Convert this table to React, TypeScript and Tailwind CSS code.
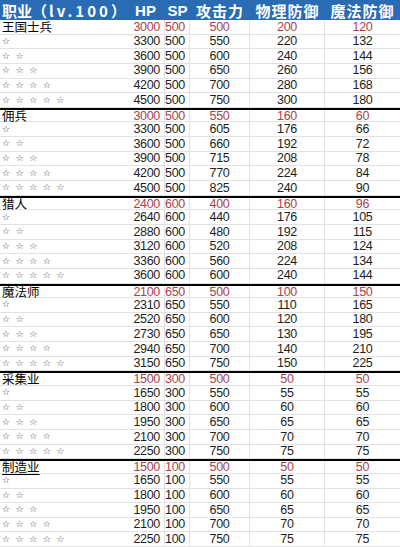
import React from "react";

type Group = {
  name: string;
  hp: number[];
  sp: number;
  atk: number[];
  def: number[];
  mdef: number[];
  underline?: boolean;
};

const STEP5 = [500, 550, 600, 650, 700, 750];
const LOW = [50, 55, 60, 65, 70, 75];

const GROUPS: Group[] = [
  {
    name: "王国士兵",
    hp: [3000, 3300, 3600, 3900, 4200, 4500],
    sp: 500,
    atk: STEP5,
    def: [200, 220, 240, 260, 280, 300],
    mdef: [120, 132, 144, 156, 168, 180],
  },
  {
    name: "佣兵",
    hp: [3000, 3300, 3600, 3900, 4200, 4500],
    sp: 500,
    atk: [550, 605, 660, 715, 770, 825],
    def: [160, 176, 192, 208, 224, 240],
    mdef: [60, 66, 72, 78, 84, 90],
  },
  {
    name: "猎人",
    hp: [2400, 2640, 2880, 3120, 3360, 3600],
    sp: 600,
    atk: [400, 440, 480, 520, 560, 600],
    def: [160, 176, 192, 208, 224, 240],
    mdef: [96, 105, 115, 124, 134, 144],
  },
  {
    name: "魔法师",
    hp: [2100, 2310, 2520, 2730, 2940, 3150],
    sp: 650,
    atk: STEP5,
    def: [100, 110, 120, 130, 140, 150],
    mdef: [150, 165, 180, 195, 210, 225],
  },
  {
    name: "采集业",
    hp: [1500, 1650, 1800, 1950, 2100, 2250],
    sp: 300,
    atk: STEP5,
    def: LOW,
    mdef: LOW,
  },
  {
    name: "制造业",
    hp: [1500, 1650, 1800, 1950, 2100, 2250],
    sp: 100,
    atk: STEP5,
    def: LOW,
    mdef: LOW,
    underline: true,
  },
];

const COLS = "grid grid-cols-[130px_35px_25px_60px_75px_75px]";
const NUM = "font-['Liberation_Sans',sans-serif] text-[12.5px] leading-none tracking-[-0.3px]";

function Stars({ n }: { n: number }) {
  // one text run per row, spaced like the sheet's "☆ ☆ ☆"
  return (
    <span className="text-[9px] leading-none tracking-[5.5px] text-[#3a3a3a] font-['DejaVu_Sans',sans-serif] whitespace-nowrap">
      {"☆".repeat(n)}
    </span>
  );
}

function Row({ g, i, top }: { g: Group; i: number; top: boolean }) {
  const first = i === 0;
  const color = first ? "text-[#ad404b]" : "text-[#1e1e1e]";
  return (
    <div
      className={`${COLS} h-[14.65px] border-b border-[#e2e2e2] ${
        top ? "border-t-[2px] border-t-black" : ""
      }`}
    >
      <div className="flex items-center pl-[2px]">
        {first ? (
          <span
            className={`text-[12.5px] leading-none text-black font-['Noto_Sans_CJK_SC',sans-serif] ${
              g.underline ? "underline underline-offset-2 decoration-1" : ""
            }`}
          >
            {g.name}
          </span>
        ) : (
          <Stars n={i} />
        )}
      </div>
      <div className={`flex items-center justify-end pr-[4px] border-r border-[#e2e2e2] ${NUM} ${color}`}>
        {g.hp[i]}
      </div>
      <div className={`flex items-center justify-end pr-[4px] border-r border-[#e2e2e2] ${NUM} ${color}`}>
        {g.sp}
      </div>
      <div className={`flex items-center justify-center border-r border-[#e2e2e2] ${NUM} ${color}`}>
        {g.atk[i]}
      </div>
      <div className={`flex items-center justify-center border-r border-[#e2e2e2] ${NUM} ${color}`}>
        {g.def[i]}
      </div>
      <div className={`flex items-center justify-center ${NUM} ${color}`}>{g.mdef[i]}</div>
    </div>
  );
}

export default function App() {
  return (
    <div className="w-[400px] h-[547px] overflow-hidden bg-white">
      <div
        className={`${COLS} h-[20px] bg-[#2a6cb3] text-white font-bold text-[15px] leading-none font-['Noto_Sans_CJK_SC',sans-serif]`}
      >
        <div className="flex items-center pl-[2px] whitespace-nowrap">
          职业（<span className="tracking-[3px] pl-[2px]">lv.100</span>）
        </div>
        <div className="flex items-center justify-center font-['Liberation_Sans',sans-serif] pr-[4px]">HP</div>
        <div className="flex items-center justify-center font-['Liberation_Sans',sans-serif]">SP</div>
        <div className="flex items-center justify-center tracking-[1px]">攻击力</div>
        <div className="flex items-center justify-center tracking-[1px]">物理防御</div>
        <div className="flex items-center justify-center tracking-[1px]">魔法防御</div>
      </div>
      {GROUPS.map((g, gi) =>
        [0, 1, 2, 3, 4, 5].map((i) => (
          <Row key={`${gi}-${i}`} g={g} i={i} top={gi > 0 && i === 0} />
        ))
      )}
    </div>
  );
}
